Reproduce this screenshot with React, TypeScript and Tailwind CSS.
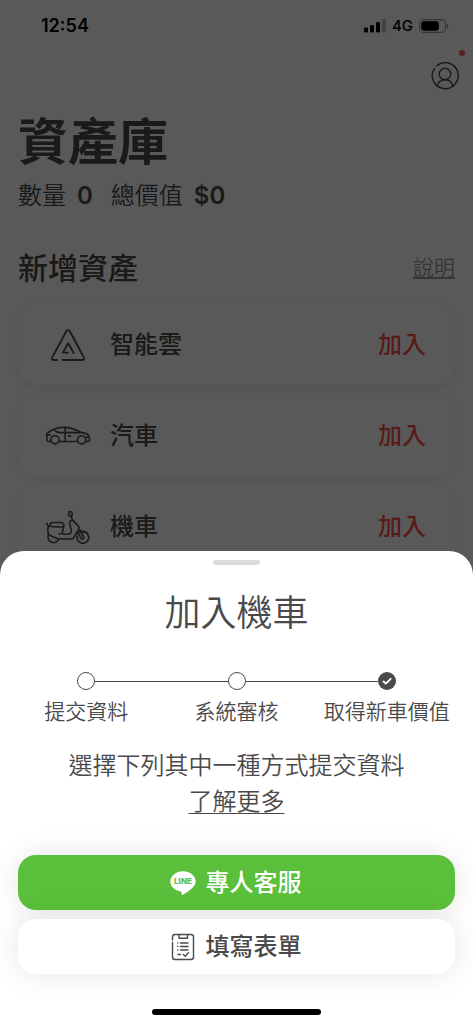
import React from "react";

type IconProps = { className?: string };

function SignalIcon() {
  return (
    <svg viewBox="0 0 22 14" className="h-3.5 w-[22px]" aria-hidden="true">
      <rect x="0" y="8.5" width="4" height="5" rx="1.2" />
      <rect x="6" y="6" width="4" height="7.5" rx="1.2" />
      <rect x="12" y="3" width="4" height="10.5" rx="1.2" />
      <rect x="18" y="0" width="4" height="13.5" rx="1.2" opacity="0.25" />
    </svg>
  );
}

function BatteryIcon() {
  return (
    <svg viewBox="0 0 30 14" className="h-3.5 w-[30px]" aria-hidden="true">
      <rect x="0.6" y="0.6" width="26" height="12.8" rx="4" fill="none" stroke="black" strokeOpacity="0.4" strokeWidth="1.1" />
      <rect x="2.3" y="2.3" width="17.5" height="9.4" rx="2.4" />
      <path d="M28 4.8c1.6.5 1.6 3.9 0 4.4z" opacity="0.45" />
    </svg>
  );
}

function AccountIcon() {
  return (
    <svg viewBox="0 0 28 28" className="size-7" fill="none" stroke="currentColor" strokeWidth="1.4" strokeLinecap="round" aria-hidden="true">
      <path d="M6 3.6A13 13 0 1 1 3.6 6.200" />
      <circle cx="14" cy="12" r="5.800" />
      <path d="M6.200 24.200c.7-4 3.800-6.400 7.800-6.400s7.100 2.400 7.800 6.400" />
    </svg>
  );
}

function CloudIcon({ className }: IconProps) {
  return (
    <svg viewBox="0 0 46 34" className={className} fill="none" stroke="currentColor" strokeWidth="1.9" strokeLinecap="round" strokeLinejoin="round" aria-hidden="true">
      <path d="M12 32H8.700c-1.600 0-2.300-1.200-1.500-2.600L21.200 3.500c.9-1.600 2.900-1.600 3.800 0L38.800 29.400c.8 1.400.1 2.600-1.500 2.600H17.500" />
      <path d="M22.800 24.600h-5L23.200 15.200 28.600 25" />
    </svg>
  );
}

function CarIcon({ className }: IconProps) {
  return (
    <svg viewBox="0 0 46 34" className={className} fill="none" stroke="currentColor" strokeWidth="1.6" strokeLinecap="round" strokeLinejoin="round" aria-hidden="true">
      <path d="M5.700 22.500H3.500c-.8 0-1.300-.5-1.400-1.300l-.5-5.200c0-.8.300-1.500.9-2 4.600-3.600 9.400-5.600 16.400-5.600 8 0 12 2.200 17 5 3.900.4 6.700 1.300 8 3.400.6 1.400.7 3 .6 4.400 0 .8-.6 1.300-1.400 1.300h-2.100M14.200 22.500h18.300" />
      <circle cx="10" cy="20.800" r="4.100" />
      <circle cx="36.700" cy="20.800" r="4.100" />
      <path d="M35.500 13.600H15c-2 0-3.700-.8-5-2M20.200 8.400v14.100M2 16h3.300M23.500 16.900h2M44 18.200h-3" />
    </svg>
  );
}

function ScooterIcon({ className }: IconProps) {
  return (
    <svg viewBox="0 0 46 34" className={className} fill="none" stroke="currentColor" strokeWidth="1.6" strokeLinecap="round" strokeLinejoin="round" aria-hidden="true">
      <path d="M24.200 1.500l2.600.5.400 3.200-1 1.300-2.700-.8z" />
      <path d="M26.300 6.600l1.300 3.500 6.200 6.500c1 1.300.2 2.300-.7 3.600l-4.400 7.600c-.6.900-1.200 1.200-2.200 1.200H13.700" />
      <path d="M27.400 10.200c-2.300.1-3.200 1.600-2.700 3.400l1.500 6.200c.5 2.600-.8 4.400-3.200 4.400h-4.200c-.9 0-1.500-.6-1.400-1.500l.9-5.800" />
      <path d="M4.800 16.200c.1-2.500 1.400-3.700 3.400-3.700h7.600c2.200 0 3.100 1.400 3.200 4.200-4.900.6-9.700.3-14.200-.5zM4.800 16.200c-2.200-.2-2.800-1.100-2.900-3M3.300 16.200c-.7 3-.6 5.800.2 8.200 2.900 2.200 6.400 3.200 10.200 4.600M14 23.700h2.300" />
      <path d="M3.200 25.300a5.400 5.400 0 1 0 10.600 3.400" />
      <path d="M32.200 26.400a5.800 5.800 0 1 0 3.300-4.200M31.400 23.800c2.900-3.300 7.600-3.500 10.800-.6" />
      <path d="M32.400 22l3.900 6.500c1.100 1.500 3.200.1 2.300-1.500L34.800 20" />
    </svg>
  );
}

function LineLogo() {
  return (
    <svg viewBox="0 0 26 26" className="size-[26px]" aria-hidden="true">
      <path fill="white" d="M13 1.200C6.100 1.200.3 5.700.3 11.400c0 5 4.500 9.200 10.600 10 .9.200.9.700.8 1.400l-.2 1.400c0 .7.300.9 1 .5 3.700-1.900 8.200-5 11.100-8.300 1.400-1.600 2.100-3.200 2.100-5C25.700 5.700 19.900 1.200 13 1.200z" />
      <text x="13" y="14.300" textAnchor="middle" fontFamily="Inter, sans-serif" fontWeight="800" fontSize="8" fill="#5abf3a">LINE</text>
    </svg>
  );
}

function FormIcon() {
  return (
    <svg viewBox="0 0 26 28" className="h-7 w-[26px]" fill="none" stroke="currentColor" strokeWidth="1.4" strokeLinecap="round" strokeLinejoin="round" aria-hidden="true">
      <path d="M2.500 7V4c0-1.700.8-2.500 2.500-2.500h16c1.700 0 2.500.8 2.500 2.500v20c0 1.700-.8 2.500-2.500 2.500H5c-1.700 0-2.500-.8-2.500-2.500V9.500" />
      <path d="M9 1.800v3.400h8.500V1.800M10.500 10H18M10.500 13.500H18M10.500 17H18M7.700 10h.1M7.700 13.500h.1M7.700 17h.1M8 21.500h2.500M13.300 21.500l1.900 1.700 3.300-3.500" />
    </svg>
  );
}

const assets = [
  { name: "智能雲", Icon: CloudIcon },
  { name: "汽車", Icon: CarIcon },
  { name: "機車", Icon: ScooterIcon },
];

const steps = [
  { label: "提交資料", done: false },
  { label: "系統審核", done: false },
  { label: "取得新車價值", done: true },
];

function StatusBar() {
  return (
    <div className="flex h-[52px] items-center justify-between pr-6 pl-[41px] text-black">
      <span className="text-lg font-semibold">12:54</span>
      <div className="flex items-center gap-1.5">
        <SignalIcon />
        <span className="text-[15px] font-medium">4G</span>
        <BatteryIcon />
      </div>
    </div>
  );
}

function AssetLibrary() {
  return (
    <main>
      <StatusBar />
      <header className="flex h-12 items-center justify-end pr-3.5">
        <button type="button" aria-label="帳戶" className="relative block">
          <AccountIcon />
          <span className="absolute -top-3 -right-1.5 size-1.5 rounded-full bg-[#ff5a50]" />
        </button>
      </header>

      <div className="px-[18px]">
        <h1 className="mt-3 text-[50px] leading-[60px] font-bold">資產庫</h1>
        <p className="mt-1.5 flex items-center text-2xl leading-9 font-[350]">
          數量<b className="ml-[11px] font-semibold">0</b>
          <span className="ml-[18px]">總價值</span>
          <b className="ml-[11px] font-semibold">$0</b>
        </p>

        <div className="mt-[34px] flex items-center justify-between">
          <h2 className="text-[30px] leading-10 font-medium">新增資產</h2>
          <a href="#help" className="text-[21px] font-[350] text-[#9b9b9b] underline underline-offset-2">說明</a>
        </div>

        <ul className="mt-[15px] flex flex-col gap-[9px]">
          {assets.map(({ name, Icon }) => (
            <li key={name} className="flex h-[82px] items-center rounded-[20px] bg-white pt-0.5 pr-[29px] pl-[27px] shadow-[0_3px_10px_rgba(0,0,0,0.08)]">
              <Icon className="h-[34px] w-[46px]" />
              <span className="ml-[19px] text-2xl font-medium">{name}</span>
              <button type="button" className="ml-auto text-2xl font-medium text-[#ff4f4a]">加入</button>
            </li>
          ))}
        </ul>
      </div>
    </main>
  );
}

function StepMarker({ done }: { done: boolean }) {
  return done ? (
    <span className="flex size-[18px] items-center justify-center rounded-full bg-[#4a4a4a]">
      <svg viewBox="0 0 18 18" className="size-[18px]" fill="none" stroke="white" strokeWidth="1.8" strokeLinecap="round" strokeLinejoin="round" aria-hidden="true">
        <path d="M5.500 9.500l2.300 2.200 4.900-4.900" />
      </svg>
    </span>
  ) : (
    <span className="size-[18px] rounded-full border border-[#4a4a4a] bg-white" />
  );
}

function Steps() {
  return (
    <ol className="mt-[34px] grid grid-cols-3 px-[11px]">
      {steps.map(({ label, done }, i) => (
        <li key={label} className="flex flex-col items-center">
          <div className="flex w-full items-center">
            <span className={i === 0 ? "h-px flex-1" : "h-px flex-1 bg-[#4a4a4a]"} />
            <StepMarker done={done} />
            <span className={i === steps.length - 1 ? "h-px flex-1" : "h-px flex-1 bg-[#4a4a4a]"} />
          </div>
          <span className="mt-1.5 text-[21px] leading-8 font-[350] whitespace-nowrap">{label}</span>
        </li>
      ))}
    </ol>
  );
}

function AddSheet() {
  return (
    <section
      role="dialog"
      aria-labelledby="sheet-title"
      className="absolute inset-x-0 bottom-0 rounded-t-3xl bg-white pt-[9px] pb-[9px]"
    >
      <div className="mx-auto h-[5px] w-[47px] rounded-full bg-[#dcdcdc]" />
      <h2 id="sheet-title" className="mt-[23px] text-center text-4xl leading-[50px] font-[350]">加入機車</h2>
      <Steps />
      <div className="mt-5 text-center text-2xl leading-9 font-[350]">
        <p>選擇下列其中一種方式提交資料</p>
        <a href="#more" className="underline decoration-1 underline-offset-3">了解更多</a>
      </div>
      <div className="mt-[35px] flex flex-col gap-[9px] px-[18px]">
        <button type="button" className="flex h-[55px] items-center justify-center gap-2.5 rounded-[18px] bg-[#5abf3a] pr-0.5 text-2xl font-medium text-white shadow-[0_0_30px_rgba(0,0,0,0.1)]">
          <LineLogo />
          專人客服
        </button>
        <button type="button" className="flex h-[55px] items-center justify-center gap-2.5 rounded-[18px] bg-white pr-0.5 text-2xl font-medium shadow-[0_0_30px_rgba(0,0,0,0.1)]">
          <FormIcon />
          填寫表單
        </button>
      </div>
      <div className="mx-auto mt-[35px] h-1.5 w-[169px] rounded-full bg-black" />
    </section>
  );
}

export default function App() {
  return (
    <div className="relative h-screen overflow-hidden bg-white font-['Inter','Noto_Sans_CJK_TC',sans-serif] text-[#4a4a4a]">
      <AssetLibrary />
      <div className="absolute inset-0 bg-black/65" />
      <AddSheet />
    </div>
  );
}
